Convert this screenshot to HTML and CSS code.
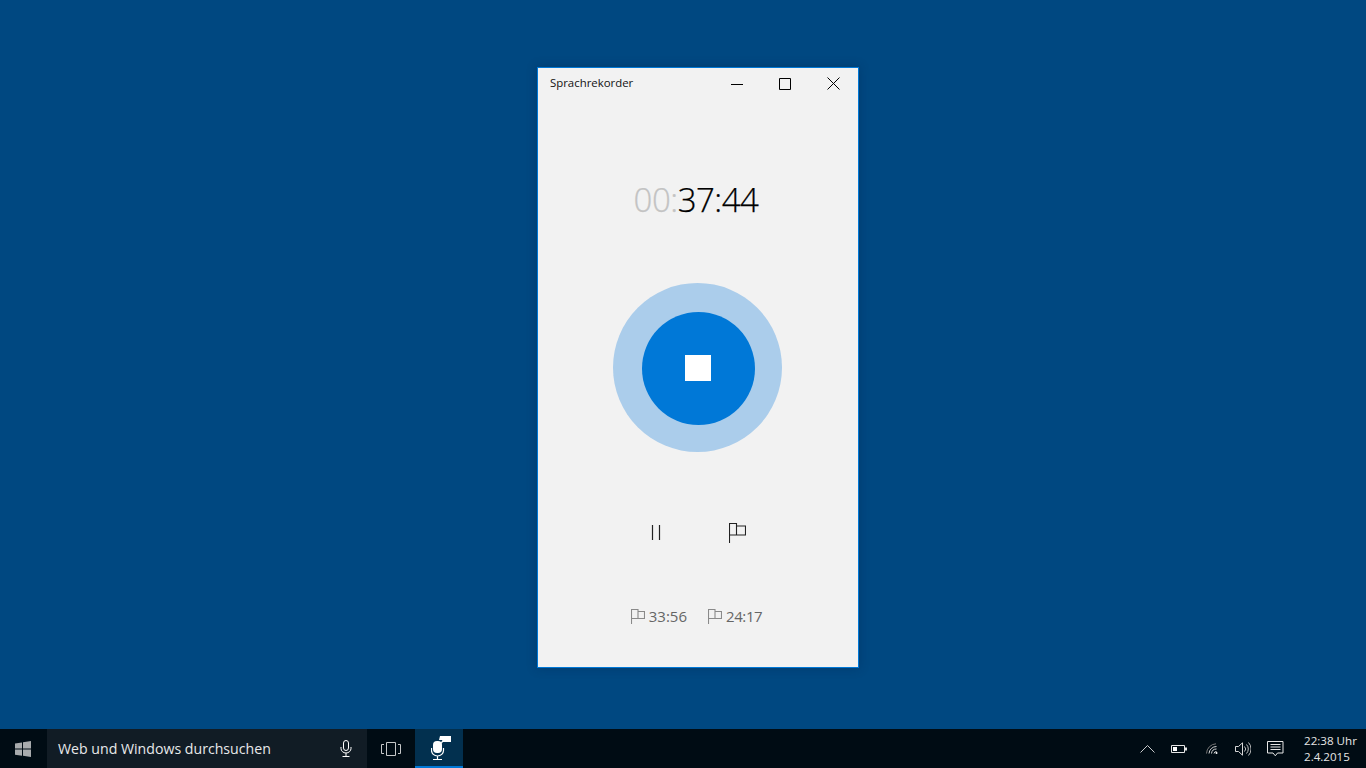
FILE: index.html
```html
<!DOCTYPE html>
<html lang="de">
<head>
<meta charset="utf-8">
<title>Sprachrekorder</title>
<link rel="stylesheet" href="styles.css">
</head>
<body>
<main class="desktop">
  <section class="window">
    <header class="titlebar">
      <span class="title">Sprachrekorder</span>
      <div class="controls">
        <button class="ctl"><svg width="12" height="12" viewBox="0 0 12 12"><path d="M0 6.500h12" stroke="#000" fill="none"/></svg></button>
        <button class="ctl"><svg width="12" height="12" viewBox="0 0 12 12"><path d="M.5.5h11v11H.5z" stroke="#000" fill="none"/></svg></button>
        <button class="ctl"><svg width="13" height="13" viewBox="0 0 13 13"><path d="M.5.5l12 12M12.500.5l-12 12" stroke="#000" fill="none"/></svg></button>
      </div>
    </header>
    <div class="timer"><span class="dim">00:</span>37:44</div>
    <div class="record">
      <div class="ring">
        <div class="disc"><div class="stop"></div></div>
      </div>
    </div>
    <div class="actions">
      <svg width="10" height="15" viewBox="0 0 10 15"><path d="M1.500 0v15M8.500 0v15" stroke="#222" stroke-width="1.200" fill="none"/></svg>
      <svg width="17" height="20" viewBox="0 0 17 20"><path d="M.5 20V.5h7v11.500h-7M7.500 3h9v9h-9" stroke="#222" stroke-width="1.100" fill="none"/></svg>
    </div>
    <div class="marks">
      <span class="mark"><svg width="14" height="15" viewBox="0 0 14 15"><path d="M.5 15V.5H7v9H.5M7 2.500h6.500v7H7" stroke="#8a8a8a" stroke-width="1.100" fill="none"/></svg>33:56</span>
      <span class="mark"><svg width="14" height="15" viewBox="0 0 14 15"><path d="M.5 15V.5H7v9H.5M7 2.500h6.500v7H7" stroke="#8a8a8a" stroke-width="1.100" fill="none"/></svg><span class="tight">24:17</span></span>
    </div>
  </section>
</main>
<footer class="taskbar">
  <div class="start">
    <svg width="16" height="16" viewBox="0 0 16 16"><path d="M0 2.400 7 1.400v6.200H0zM8 1.200 16 0v7.600H8zM0 8.500h7v6.200l-7-1zM8 8.500h8V16L8 14.800z" fill="#a8abad"/></svg>
  </div>
  <div class="search">
    <span class="search-text">Web und Windows durchsuchen</span>
    <svg width="12" height="17" viewBox="0 0 12 17"><rect x="3.500" y=".5" width="5" height="10" rx="2.500" fill="none" stroke="#fff"/><path d="M1 7v1.500a5 4.500 0 0 0 10 0V7M6 13v3M2.500 16.500h7" fill="none" stroke="#fff"/></svg>
  </div>
  <div class="taskview">
    <svg width="20" height="14" viewBox="0 0 20 14"><path d="M5.500.5h9v13h-9zM3 2.500H.5v9H3M17 2.500h2.500v9H17" fill="none" stroke="#c6c8c9"/></svg>
  </div>
  <div class="app">
    <svg width="20" height="24" viewBox="0 0 20 24"><rect x="2" y="5" width="9" height="12" rx="4" fill="#fff"/><path d="M.5 12v2.500a6 5.500 0 0 0 12 0V12M6.500 20v3.500M2 23.500h9" fill="none" stroke="#fff" stroke-width="1.200"/><path d="M8 4 9 0h11v6h-8l-2 2V6.500L11.500 4z" fill="#fff"/></svg>
  </div>
  <div class="tray">
    <svg width="15" height="8" viewBox="0 0 15 8"><path d="M.5 7.500l7-7 7 7" fill="none" stroke="#c9cbcc"/></svg>
    <svg class="t-bat" width="16" height="8" viewBox="0 0 16 8"><path d="M.5.5h13v7H.5z" fill="none" stroke="#e6e6e6"/><path d="M2 2h4v4H2z" fill="#fff"/><path d="M14 2.500h2v3h-2z" fill="#e6e6e6"/></svg>
    <svg class="t-wifi" width="13" height="11" viewBox="0 0 13 11"><path d="M.5 10.500A10 10 0 0 1 10 .8" fill="none" stroke="#777"/><path d="M3 10.500A7.500 7.500 0 0 1 10.500 3.500M5.500 10.500A5 5 0 0 1 10.500 6M8 10.500A2.500 2.500 0 0 1 10.500 8.500" fill="none" stroke="#d4d4d4"/><circle cx="10.500" cy="10" r="1" fill="#fff"/></svg>
    <svg class="t-vol" width="16" height="14" viewBox="0 0 16 14"><path d="M.5 4.500h3L7.500.8v12.400l-4-3.700h-3z" fill="none" stroke="#d8d8d8"/><path d="M9.500 4.500a3.500 3.500 0 0 1 0 5M11.500 2.500a6.500 6.500 0 0 1 0 9M13.500.5a9.500 9.500 0 0 1 0 13" fill="none" stroke="#c4c4c4"/></svg>
    <svg class="t-note" width="17" height="16" viewBox="0 0 17 16"><path d="M.5.5h15.500v11.500h-5.500l-2.200 2.800-2.300-2.800H.5z" fill="none" stroke="#e6e6e6"/><path d="M3.500 3.500h10M3.500 6h10M3.500 8.500h10" fill="none" stroke="#e6e6e6"/></svg>
    <div class="clock"><span>22:38 Uhr</span><span>2.4.2015</span></div>
  </div>
</footer>
</body>
</html>
```

FILE: styles.css
```css
* { box-sizing: border-box; }
html, body { height: 100%; }
body {
  margin: 0;
  width: 1366px;
  height: 768px;
  overflow: hidden;
  display: flex;
  flex-direction: column;
  background: #004881;
  font-family: "Open Sans", "Noto Sans", sans-serif;
}
svg { display: block; }
.desktop { position: relative; flex: 1; }
.window {
  position: absolute;
  left: 537px;
  top: 67px;
  width: 322px;
  height: 601px;
  display: flex;
  flex-direction: column;
  background: #f2f2f2;
  border: 1px solid #0078d7;
  box-shadow: 0 0 10px rgba(0, 30, 70, .3);
}
.titlebar { display: flex; justify-content: space-between; height: 31px; flex: none; }
.title { padding: 7px 0 0 12px; font-size: 11.4px; line-height: 16px; color: #111; }
.controls { display: flex; padding-right: 1px; }
.ctl {
  width: 48px;
  height: 31px;
  padding: 0;
  border: 0;
  background: none;
  display: flex;
  align-items: center;
  justify-content: center;
}
.timer {
  margin-top: 78px;
  padding-right: 4px;
  height: 46px;
  font-weight: 300;
  font-size: 33px;
  letter-spacing: -.5px;
  -webkit-text-stroke: .25px;
  line-height: 46px;
  text-align: center;
  color: #000;
}
.dim { color: #c3c3c3; }
.record { margin-top: 60px; padding-right: 1px; display: flex; justify-content: center; }
.ring {
  width: 169px;
  height: 169px;
  padding: 29px 0 0 29px;
  border-radius: 50%;
  background: #abcdeb;
}
.disc {
  width: 113px;
  height: 113px;
  padding: 0 2px 2px 0;
  border-radius: 50%;
  background: #0078d7;
  display: flex;
  align-items: center;
  justify-content: center;
}
.stop { width: 26px; height: 26px; background: #fff; }
.actions {
  margin-top: 69px;
  height: 23px;
  display: flex;
  align-items: center;
  justify-content: center;
  gap: 68px;
}
.marks {
  margin-top: 62px;
  padding-right: 3px;
  display: flex;
  justify-content: center;
  gap: 21px;
  color: #666;
  font-size: 15px;
  line-height: 20px;
}
.mark { display: flex; align-items: center; gap: 4px; }
.tight { letter-spacing: -.4px; }
.taskbar {
  height: 39px;
  flex: none;
  display: flex;
  background: #000c14;
  color: #fff;
}
.start { width: 47px; padding-right: 2px; display: flex; align-items: center; justify-content: center; }
.search {
  width: 320px;
  background: #111c25;
  display: flex;
  align-items: center;
  justify-content: space-between;
  padding: 0 15px 0 11px;
}
.search-text { font-size: 14.15px; color: #e8e9ea; }
.taskview { width: 48px; display: flex; align-items: center; justify-content: center; }
.app {
  width: 48px;
  padding-left: 4px;
  background: #02304f;
  border-bottom: 2px solid #0078d7;
  display: flex;
  align-items: center;
  justify-content: center;
}
.tray { flex: 1; display: flex; align-items: center; padding-left: 677px; }
.t-bat { margin-left: 16px; }
.t-wifi { margin-left: 19px; }
.t-vol { margin-left: 16px; }
.t-note { margin-left: 16px; }
.clock {
  margin-left: 20px;
  display: flex;
  flex-direction: column;
  font-size: 11.6px;
  line-height: 16px;
  color: #e6e6e6;
  white-space: nowrap;
}
```
